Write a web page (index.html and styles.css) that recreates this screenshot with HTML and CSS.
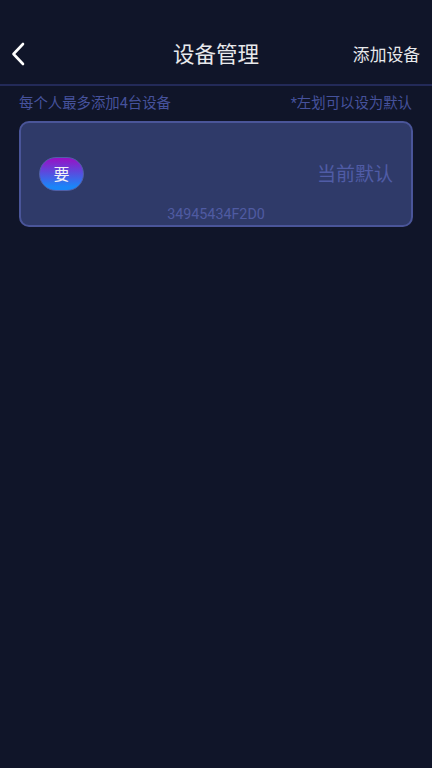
FILE: index.html
```html
<!DOCTYPE html>
<html lang="zh-CN">
<head>
    <meta charset="UTF-8">
    <meta name="viewport" content="width=device-width, initial-scale=1.0">
    <title>设备管理</title>
    <link rel="stylesheet" href="styles.css">
</head>
<body>

<!-- Top bar -->
<header class="top-bar">
    <svg class="back-icon" width="14" height="24" viewBox="0 0 14 24">
        <path d="M12 2 L2.5 12 L12 22" fill="none" stroke="#ffffff" stroke-width="2.6" stroke-linecap="round" stroke-linejoin="round"/>
    </svg>
    <h1>设备管理</h1>
    <span class="add-device">添加设备</span>
</header>

<div class="hint-row">
    <span>每个人最多添加4台设备</span>
    <span>*左划可以设为默认</span>
</div>

<!-- Device card -->
<div class="device-card">
    <div class="device-main">
        <span class="device-badge">要</span>
        <span class="default-label">当前默认</span>
    </div>
    <div class="device-id">34945434F2D0</div>
</div>

</body>
</html>
```

FILE: styles.css
```css
* {
    margin: 0;
    padding: 0;
    box-sizing: border-box;
}

body {
    width: 432px;
    height: 768px;
    overflow: hidden;
    background-color: #101529;
    font-family: Roboto, "Noto Sans CJK SC", sans-serif;
}

.top-bar {
    display: flex;
    align-items: center;
    justify-content: space-between;
    position: relative;
    height: 86px;
    padding: 24px 12px 0 11px;
    border-bottom: 2px solid #232a58;
}

.back-icon {
    display: block;
}

.top-bar h1 {
    position: absolute;
    left: 0;
    right: 0;
    top: 40px;
    text-align: center;
    font-size: 21.5px;
    line-height: 30px;
    font-weight: 400;
    color: #e8e9ec;
}

.add-device {
    font-size: 16.8px;
    line-height: 20px;
    margin-top: 2px;
    color: #e8e9ec;
}

.hint-row {
    display: flex;
    justify-content: space-between;
    padding: 8px 20px 0 19px;
    height: 35px;
    font-size: 14.4px;
    line-height: 20px;
    color: #46529c;
}

.device-card {
    margin: 0 19px;
    height: 106px;
    border: 2px solid #4a5599;
    border-radius: 10px;
    background-color: #2f3a69;
}

.device-main {
    display: flex;
    align-items: center;
    justify-content: space-between;
    height: 102px;
    margin-bottom: -19px;
    padding: 0 18px;
}

.device-badge {
    width: 45px;
    height: 34px;
    padding-bottom: 3px;
    border-radius: 17px;
    display: flex;
    align-items: center;
    justify-content: center;
    font-size: 16px;
    color: #f2f2f6;
    background: linear-gradient(to bottom, #9a10c4, #1a86f8 90%);
    border: 1px solid #4f5fa8;
}

.default-label {
    font-size: 19px;
    line-height: 24px;
    margin-top: 2px;
    color: #505ca6;
}

.device-id {
    text-align: center;
    font-size: 14.3px;
    line-height: 16px;
    color: #4f5ba2;
}
```
